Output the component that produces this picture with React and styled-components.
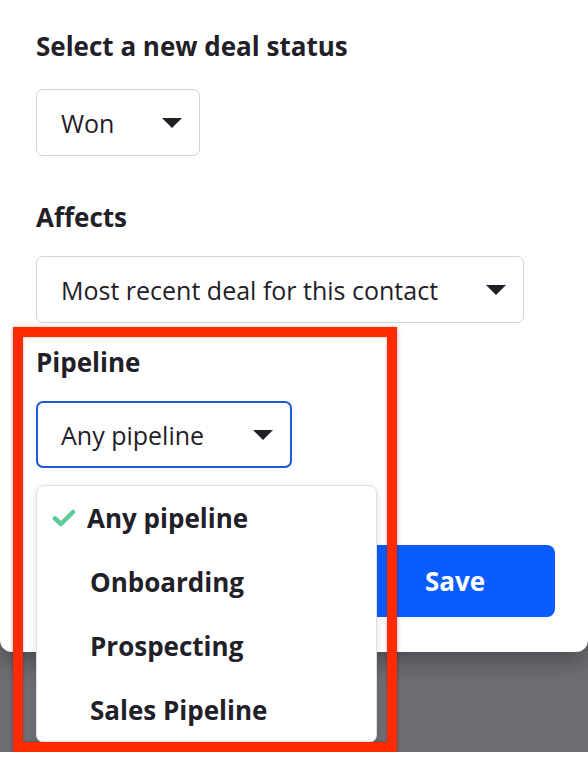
import React from "react";
import styled, { createGlobalStyle } from "styled-components";

const GlobalStyle = createGlobalStyle`
  html, body {
    margin: 0;
    padding: 0;
    background: #ffffff;
  }
  body {
    font-family: "Open Sans", "Liberation Sans", Arial, sans-serif;
    color: #1f2028;
  }
`;

const Backdrop = styled.div`
  position: relative;
  height: 752px;
  background: #6e6f75;
  overflow: hidden;
`;

const Modal = styled.div`
  position: relative;
  background: #ffffff;
  border-radius: 0 0 12px 12px;
  box-shadow: 0 8px 26px rgba(0, 0, 0, 0.35);
  padding: 29px 33px 35px 36px;
`;

const Heading = styled.h2`
  margin: 0 0 26px;
  font-size: 26px;
  line-height: 34px;
  font-weight: 700;
`;

const Field = styled.div`
  position: relative;
  margin-top: ${(p) => p.$top || 0}px;
`;

const Label = styled.div`
  font-size: 26px;
  line-height: 34px;
  font-weight: 700;
  margin-bottom: 22px;
`;

const Select = styled.div`
  box-sizing: border-box;
  width: ${(p) => p.$width}px;
  height: 67px;
  display: flex;
  align-items: center;
  justify-content: space-between;
  padding: 0 17px 0 ${(p) => (p.$focused ? 23 : 24)}px;
  border: ${(p) => (p.$focused ? "2px solid #1c58d8" : "1.5px solid #cfd2d8")};
  border-radius: 7px;
  background: #ffffff;
  font-size: 25px;
  line-height: 32px;
  color: #1f2028;
`;

const Caret = styled.span`
  width: 0;
  height: 0;
  border-left: 10px solid transparent;
  border-right: 10px solid transparent;
  border-top: 10px solid #1f2028;
`;

const Menu = styled.ul`
  position: absolute;
  z-index: 5;
  top: calc(100% + 17px);
  left: 0;
  width: 339px;
  margin: 0;
  padding: 0;
  list-style: none;
  background: #ffffff;
  border: 1px solid #dfe0e5;
  border-radius: 8px;
  box-shadow: 0 3px 10px rgba(0, 0, 0, 0.12);
`;

const Item = styled.li`
  height: 64px;
  display: flex;
  align-items: center;
  gap: 11px;
  padding-left: ${(p) => (p.$selected ? 15 : 53)}px;
  font-size: 26px;
  font-weight: 700;
  color: #1f2028;
`;

const Footer = styled.div`
  display: flex;
  justify-content: flex-end;
  margin-top: 77px;
`;

const SaveButton = styled.button`
  width: 200px;
  height: 72px;
  border: none;
  border-radius: 8px;
  font-family: inherit;
  font-size: 26px;
  font-weight: 700;
  background: #0b5cff;
  color: #ffffff;
`;

const Highlight = styled.div`
  position: absolute;
  left: 13px;
  top: 327px;
  width: 384px;
  height: 425px;
  box-sizing: border-box;
  border: 10px solid #ff2a00;
  box-shadow: 0 1px 4px rgba(0, 0, 0, 0.35), inset 0 0 3px rgba(0, 0, 0, 0.3);
  pointer-events: none;
  z-index: 10;
`;

const Check = () => (
  <svg width="24" height="18" viewBox="0 0 24 18" aria-hidden="true">
    <path
      d="M3 9.5 L9 15 L21 3"
      fill="none"
      stroke="#5dcb98"
      strokeWidth="4.5"
      strokeLinecap="round"
      strokeLinejoin="round"
    />
  </svg>
);

const pipelines = ["Any pipeline", "Onboarding", "Prospecting", "Sales Pipeline"];

export default function App() {
  return (
    <>
      <GlobalStyle />
      <Backdrop>
        <Modal>
          <Heading>Select a new deal status</Heading>
          <Select $width={164}>
            <span>Won</span>
            <Caret />
          </Select>

          <Field $top={44}>
            <Label>Affects</Label>
            <Select $width={488}>
              <span>Most recent deal for this contact</span>
              <Caret />
            </Select>
          </Field>

          <Field $top={22}>
            <Label>Pipeline</Label>
            <Select $width={256} $focused>
              <span>Any pipeline</span>
              <Caret />
            </Select>
            <Menu>
              {pipelines.map((name, i) => (
                <Item key={name} $selected={i === 0}>
                  {i === 0 && <Check />}
                  {name}
                </Item>
              ))}
            </Menu>
          </Field>

          <Footer>
            <SaveButton>Save</SaveButton>
          </Footer>
        </Modal>
        <Highlight />
      </Backdrop>
    </>
  );
}
